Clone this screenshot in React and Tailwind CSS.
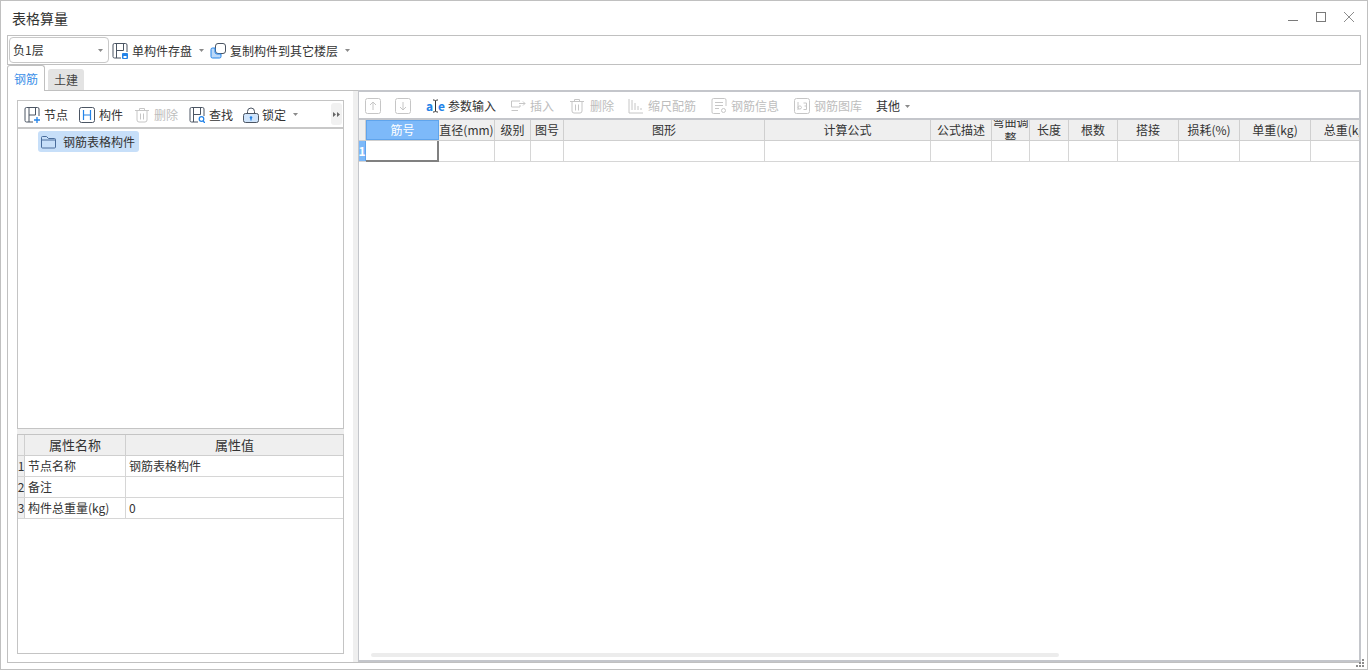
import React from "react";

const D = "#4b5563";
const B = "#2383e8";
const G = "#c6c6c6";

function Svg({ children, w = 16, h = 16, className = "" }) {
  return (
    <svg width={w} height={h} viewBox={`0 0 ${w} ${h}`} fill="none" className={`shrink-0 ${className}`}>
      {children}
    </svg>
  );
}
const Frame = ({ c = D }) => (
  <path d="M15 9V2a1.500 1.500 0 0 0-1.500-1.500h-11A1.500 1.500 0 0 0 1 2v11.500A1.500 1.500 0 0 0 2.500 15H9" stroke={c} />
);
const SaveIcon = () => (
  <Svg>
    <Frame />
    <path d="M4.500 1v14M4.500 7.500h7V1" stroke={D} />
    <rect x="10" y="10" width="6" height="6" rx="1" fill={B} />
    <rect x="11.500" y="13" width="3" height="2" fill="#fff" />
  </Svg>
);
const CopyIcon = () => (
  <Svg>
    <rect x="5.500" y="0.500" width="10" height="10" rx="2.500" stroke={D} fill="#fff" />
    <path d="M5 5H2.500A1.500 1.500 0 0 0 1 6.500v7A1.500 1.500 0 0 0 2.500 15h7a1.500 1.500 0 0 0 1.500-1.500V11H7a2 2 0 0 1-2-2z" stroke={B} fill="#bcd9f8" />
  </Svg>
);
const NodeIcon = () => (
  <Svg>
    <Frame />
    <path d="M5 1v14M5 8h6.500M11.500 1v7" stroke={D} />
    <path d="M13 10v6M10 13h6" stroke={B} strokeWidth="1.300" />
  </Svg>
);
const PartIcon = () => (
  <Svg>
    <rect x="0.500" y="0.500" width="15" height="15" rx="2" stroke={D} />
    <path d="M4.500 3v10M11.500 3v10M4.500 8h7" stroke={B} strokeWidth="1.200" />
  </Svg>
);
const TrashIcon = ({ c = G }) => (
  <Svg>
    <path d="M1 3.500h14M5.500 3.500V1.500h5v2M3 3.500V13a2 2 0 0 0 2 2h6a2 2 0 0 0 2-2V3.500M6.500 6.500v6M9.500 6.500v6" stroke={c} />
  </Svg>
);
const FindIcon = () => (
  <Svg>
    <Frame />
    <path d="M4.500 1v14M4.500 7.500h7V1" stroke={D} />
    <circle cx="12.500" cy="12" r="2.300" stroke={B} strokeWidth="1.200" />
    <path d="M14 14l2 2" stroke={B} strokeWidth="1.300" />
  </Svg>
);
const LockIcon = () => (
  <Svg>
    <path d="M4.500 7V4.500a3.500 3.500 0 0 1 7 0V7" stroke={D} />
    <rect x="0.500" y="6.500" width="15" height="9" rx="2" stroke={D} fill="#cfe4fb" />
    <circle cx="8" cy="10.500" r="1.300" fill={B} />
    <path d="M8 10.500V13.500" stroke={B} strokeWidth="1.300" />
  </Svg>
);
const FolderIcon = () => (
  <Svg w={15} h={14}>
    <path d="M0.500 2.500a1 1 0 0 1 1-1h4l2 2h6a1 1 0 0 1 1 1v7.500a1 1 0 0 1-1 1h-12a1 1 0 0 1-1-1z" stroke="#4a6d9c" />
    <path d="M0.500 5h14" stroke="#4a6d9c" />
  </Svg>
);
const UpIcon = ({ flip }) => (
  <Svg>
    <rect x="0.500" y="0.500" width="15" height="15" rx="2" stroke={G} />
    <path d={flip ? "M8 4v8M5 9l3 3 3-3" : "M8 12V4M5 7l3-3 3 3"} stroke={G} />
  </Svg>
);
const ParamIcon = () => (
  <div className="w-[18px] h-[16px] shrink-0 flex items-center justify-between text-[12px] leading-[16px] font-bold text-[#2383e8]">
    <span>a</span>
    <svg width="5" height="14" viewBox="0 0 5 14" fill="none" className="shrink-0">
      <path d="M0 1h1.500l1 1 1-1H5M2.500 2v10M0 13h1.500l1-1 1 1H5" stroke="#333" />
    </svg>
    <span>e</span>
  </div>
);
const InsertIcon = () => (
  <Svg>
    <path d="M10 3H1.500v6H10V7" stroke={G} />
    <path d="M1.500 12.500H8M9 5.500h6M13 3.500l2 2-2 2" stroke={G} />
  </Svg>
);
const ScaleIcon = () => (
  <Svg>
    <path d="M1 1v14h14M4 2v10M7 5v7M10 8v4M13 10v2" stroke={G} />
  </Svg>
);
const InfoIcon = () => (
  <Svg>
    <path d="M15 8V2a1.500 1.500 0 0 0-1.500-1.500h-11A1.500 1.500 0 0 0 1 2v12a1.500 1.500 0 0 0 1.500 1.500H9" stroke={G} />
    <path d="M4 4.500h8M4 7.500h8M4 10.500h4" stroke={G} />
    <circle cx="12.500" cy="12.500" r="2" stroke={G} />
  </Svg>
);
const LibIcon = () => (
  <Svg>
    <rect x="0.500" y="0.500" width="15" height="15" rx="2" stroke={G} />
    <path d="M4 4v8M4 9.500c0-2 3.500-2 3.500 0s-3.500 2-3.500 0M9.500 5H12.500v3H10.500M9.500 11.500h3V8" stroke={G} />
  </Svg>
);
const Caret = ({ className = "" }) => (
  <svg width="5" height="3" viewBox="0 0 5 3" className={`shrink-0 ${className}`}>
    <path d="M0 0h5L2.500 3z" fill="#8a8a8a" />
  </svg>
);

const columns = [
  { t: "筋号", w: "w-[73px]", sel: true },
  { t: "直径(mm)", w: "w-[56px]" },
  { t: "级别", w: "w-[36px]" },
  { t: "图号", w: "w-[33px]" },
  { t: "图形", w: "w-[201px]" },
  { t: "计算公式", w: "w-[166px]" },
  { t: "公式描述", w: "w-[61px]" },
  { t: "弯曲调整", w: "w-[38px]", wrap: true },
  { t: "长度", w: "w-[39px]" },
  { t: "根数", w: "w-[49px]" },
  { t: "搭接", w: "w-[61px]" },
  { t: "损耗(%)", w: "w-[61px]" },
  { t: "单重(kg)", w: "w-[71px]" },
  { t: "总重(kg)", w: "w-[72px]" },
];

const props = [
  ["1", "节点名称", "钢筋表格构件"],
  ["2", "备注", ""],
  ["3", "构件总重量(kg)", "0"],
];

function Tool({ icon, label, off, className = "", gap = "gap-[4px]" }) {
  return (
    <div className={`flex items-center shrink-0 ${gap} ${className}`}>
      {icon}
      <span className={off ? "text-[#bdbdbd]" : "text-[#333]"}>{label}</span>
    </div>
  );
}

export default function App() {
  return (
    <div
      className="w-[1368px] h-[670px] bg-white border border-[#c0c0c0] flex flex-col overflow-hidden text-[12px] leading-[16px] text-[#333] relative"
      style={{ fontFamily: '"Noto Sans CJK SC", "Noto Sans", sans-serif' }}
    >
      {/* title bar */}
      <div className="h-[34px] shrink-0 flex items-center pl-[11px] pr-[13px] pb-[1px]">
        <span className="text-[14px] leading-[20px]">表格算量</span>
        <div className="ml-auto flex items-center gap-[18px] pb-[2px]">
          <svg width="10" height="10" viewBox="0 0 10 10" fill="none"><path d="M0 8.500h10" stroke="#7a7a7a" /></svg>
          <svg width="10" height="10" viewBox="0 0 10 10" fill="none"><rect x="0.500" y="0.500" width="9" height="9" stroke="#7a7a7a" /></svg>
          <svg width="10" height="10" viewBox="0 0 10 10" fill="none"><path d="M0 0l10 10M10 0L0 10" stroke="#8c8c8c" /></svg>
        </div>
      </div>

      {/* top toolbar */}
      <div className="h-[30px] shrink-0 ml-[6px] w-[1354px] border border-[#c0c0c0] flex items-center pl-[1px]">
        <div className="w-[100px] h-[26px] border border-[#c8c8c8] rounded-[4px] flex items-center pl-[3px] pr-[5px]">
          <span>负1层</span>
          <Caret className="ml-auto" />
        </div>
        <Tool className="ml-[3px] pt-[1px]" icon={<SaveIcon />} label="单构件存盘" />
        <Caret className="ml-[7px]" />
        <Tool className="ml-[6px] pt-[1px]" icon={<CopyIcon />} label="复制构件到其它楼层" />
        <Caret className="ml-[7px]" />
      </div>

      {/* tabs */}
      <div className="h-[25px] shrink-0 ml-[6px] flex items-end">
        <div className="relative z-10 -mb-px w-[38px] h-[26px] bg-white border border-b-0 border-[#c0c0c0] rounded-t-[3px] flex items-center justify-center text-[#3b8fe8]">
          钢筋
        </div>
        <div className="ml-[3px] w-[36px] h-[21px] bg-[#e3e3e3] rounded-t-[3px] flex items-center justify-center text-[#444]">
          土建
        </div>
      </div>

      {/* body */}
      <div className="h-[573px] ml-[6px] w-[1354px] flex border-l border-b border-t border-[#c0c0c0]">
        {/* left */}
        <div className="w-[345px] shrink-0 pl-[9px] pr-[9px] pt-[9px] flex flex-col">
          <div className="h-[329px] border border-[#c4c4c4] flex flex-col">
            <div className="h-[28px] shrink-0 border-b-2 border-[#c8c8c8] flex items-center pl-[6px] pt-[1px]">
              <Tool icon={<NodeIcon />} label="节点" />
              <Tool className="ml-[11px]" icon={<PartIcon />} label="构件" />
              <Tool className="ml-[11px]" icon={<TrashIcon />} label="删除" off />
              <Tool className="ml-[11px]" icon={<FindIcon />} label="查找" />
              <Tool className="ml-[10px]" gap="gap-[3px]" icon={<LockIcon />} label="锁定" />
              <Caret className="ml-[7px]" />
              <div className="ml-auto mr-[1px] mb-[1px] w-[11px] h-[22px] bg-[#f1f1f1] rounded-[3px] flex items-center justify-center">
                <svg width="7" height="5" viewBox="0 0 7 5"><path d="M0 0l3 2.500L0 5zM4 0l3 2.500L4 5z" fill="#666" /></svg>
              </div>
            </div>
            <div className="pl-[20px] pt-[2px]">
              <div className="w-[101px] h-[21px] bg-[#c7dff9] rounded-[3px] flex items-center pl-[3px] gap-[7px]">
                <FolderIcon />
                <span className="text-[#333] whitespace-nowrap">钢筋表格构件</span>
              </div>
            </div>
          </div>
          <div className="h-[5px] shrink-0 bg-[#efefef]" />
          <div className="h-[220px] border border-[#c4c4c4]">
            <div className="flex h-[21px] border-b border-[#cfcfcf] bg-[#efefef] text-[13px]">
              <div className="w-[7px] border-r border-[#cfcfcf]" />
              <div className="w-[101px] border-r border-[#cfcfcf] flex items-center justify-center">属性名称</div>
              <div className="flex-1 flex items-center justify-center">属性值</div>
            </div>
            {props.map((r) => (
              <div key={r[0]} className="flex h-[21px] border-b border-[#d6d6d6]">
                <div className="w-[7px] bg-[#efefef] border-r border-[#cfcfcf] flex items-center justify-center text-[#333]">{r[0]}</div>
                <div className="w-[101px] border-r border-[#d6d6d6] flex items-center pl-[3px]">{r[1]}</div>
                <div className="flex-1 flex items-center pl-[3px]">{r[2]}</div>
              </div>
            ))}
          </div>
        </div>

        {/* splitter */}
        <div className="w-[5px] shrink-0 bg-[#efefef]" />

        {/* right */}
        <div className="flex-1 min-w-0 -mt-px border-l border-t-2 border-r-2 border-b-2 border-[#c4c6cb] flex flex-col relative overflow-hidden">
          <div className="h-[26px] shrink-0 flex items-center pl-[6px] pt-[2px]">
            <UpIcon />
            <div className="ml-[14px]"><UpIcon flip /></div>
            <Tool className="ml-[15px]" icon={<ParamIcon />} label="参数输入" />
            <Tool className="ml-[14px]" icon={<InsertIcon />} label="插入" off />
            <Tool className="ml-[15px]" gap="gap-[5px]" icon={<TrashIcon />} label="删除" off />
            <Tool className="ml-[14px]" icon={<ScaleIcon />} label="缩尺配筋" off />
            <Tool className="ml-[15px]" icon={<InfoIcon />} label="钢筋信息" off />
            <Tool className="ml-[15px]" icon={<LibIcon />} label="钢筋图库" off />
            <span className="ml-[14px]">其他</span>
            <Caret className="ml-[5px]" />
          </div>
          {/* header */}
          <div className="flex h-[23px] shrink-0 border-t-2 border-b border-t-[#c4c6cb] border-b-[#cfcfcf] bg-[#efefef]">
            <div className="w-[7px] shrink-0 border-r border-[#cfcfcf]" />
            {columns.map((c) => (
              <div
                key={c.t}
                className={`${c.w} shrink-0 flex items-center justify-center overflow-hidden ${c.sel ? "bg-[#7db9f9] text-white border border-[#5fa4ec]" : "border-r border-[#cfcfcf]"} ${c.wrap ? "whitespace-normal text-center break-all" : "whitespace-nowrap"}`}
              >
                {c.t}
              </div>
            ))}
          </div>
          {/* row */}
          <div className="flex h-[21px] shrink-0 border-b border-[#d6d6d6]">
            <div className="relative z-10 w-[7px] shrink-0 bg-[#7db9f9] text-white flex items-center justify-center font-bold border-r border-[#5fa4ec]">1</div>
            {columns.map((c) => (
              <div
                key={c.t}
                className={`${c.w} shrink-0 ${c.sel ? "relative -mb-px border-r-2 border-b-2 border-[#808080]" : "border-r border-[#d6d6d6]"}`}
              />
            ))}
          </div>
          <div className="flex-1" />
          {/* scrollbar */}
          <div className="h-[4px] ml-[12px] mb-[3px] w-[688px] bg-[#ececec] rounded-full shrink-0" />
        </div>
      </div>

      {/* resize grip */}
      <svg width="9" height="9" viewBox="0 0 9 9" className="absolute right-[2px] bottom-[1px]">
        <path d="M6 0h2v2H6zM3 3h2v2H3zM6 3h2v2H6zM0 6h2v2H0zM3 6h2v2H3zM6 6h2v2H6z" fill="#8c8c8c" />
      </svg>
    </div>
  );
}
